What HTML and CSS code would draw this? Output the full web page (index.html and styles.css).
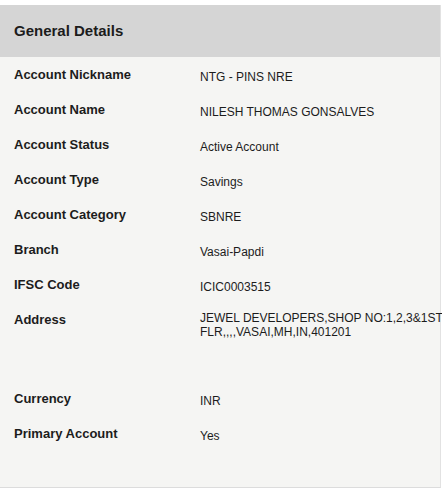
FILE: index.html
```html
<!DOCTYPE html>
<html>

<head>
    <link rel="stylesheet" href="styles.css">
</head>

<body>
    <div class="panel">
        <div class="panel-head">General Details</div>
        <div class="details">
            <div class="row">
                <div class="label">Account Nickname</div>
                <div class="value">NTG - PINS NRE</div>
            </div>
            <div class="row">
                <div class="label">Account Name</div>
                <div class="value">NILESH THOMAS GONSALVES</div>
            </div>
            <div class="row">
                <div class="label">Account Status</div>
                <div class="value">Active Account</div>
            </div>
            <div class="row">
                <div class="label">Account Type</div>
                <div class="value">Savings</div>
            </div>
            <div class="row">
                <div class="label">Account Category</div>
                <div class="value">SBNRE</div>
            </div>
            <div class="row">
                <div class="label">Branch</div>
                <div class="value">Vasai-Papdi</div>
            </div>
            <div class="row">
                <div class="label">IFSC Code</div>
                <div class="value">ICIC0003515</div>
            </div>
            <div class="row row-tall">
                <div class="label">Address</div>
                <div class="value value-wrap">JEWEL DEVELOPERS,SHOP NO:1,2,3&amp;1ST FLR,,,,VASAI,MH,IN,401201</div>
            </div>
            <div class="row">
                <div class="label">Currency</div>
                <div class="value">INR</div>
            </div>
            <div class="row">
                <div class="label">Primary Account</div>
                <div class="value">Yes</div>
            </div>
        </div>
    </div>
</body>

</html>
```

FILE: styles.css
```css
body {
    margin: 0;
    background-color: #ffffff;
    font-family: "Liberation Sans", Arial, sans-serif;
    color: #1c1c1c;
}

.panel {
    width: 440px;
    margin-top: 5px;
    border-right: 1px solid #e2e2e2;
    border-bottom: 1px solid #dcdcdc;
    background-color: #f5f5f3;
}

.panel-head {
    display: flex;
    align-items: center;
    height: 51px;
    padding-bottom: 1px;
    padding-left: 14px;
    background-color: #d5d5d5;
    font-size: 15px;
    font-weight: bold;
}

.details {
    padding: 10px 0 26px 0;
}

.row {
    display: grid;
    grid-template-columns: 186px 250px;
    height: 35px;
    padding-left: 14px;
}

.row-tall {
    height: 79px;
}

.label {
    font-size: 13px;
    font-weight: bold;
    line-height: 16px;
}

.value {
    font-size: 12px;
    line-height: 16px;
    padding-top: 2px;
}

.value-wrap {
    line-height: 13.5px;
    padding-top: 0;
}
```
